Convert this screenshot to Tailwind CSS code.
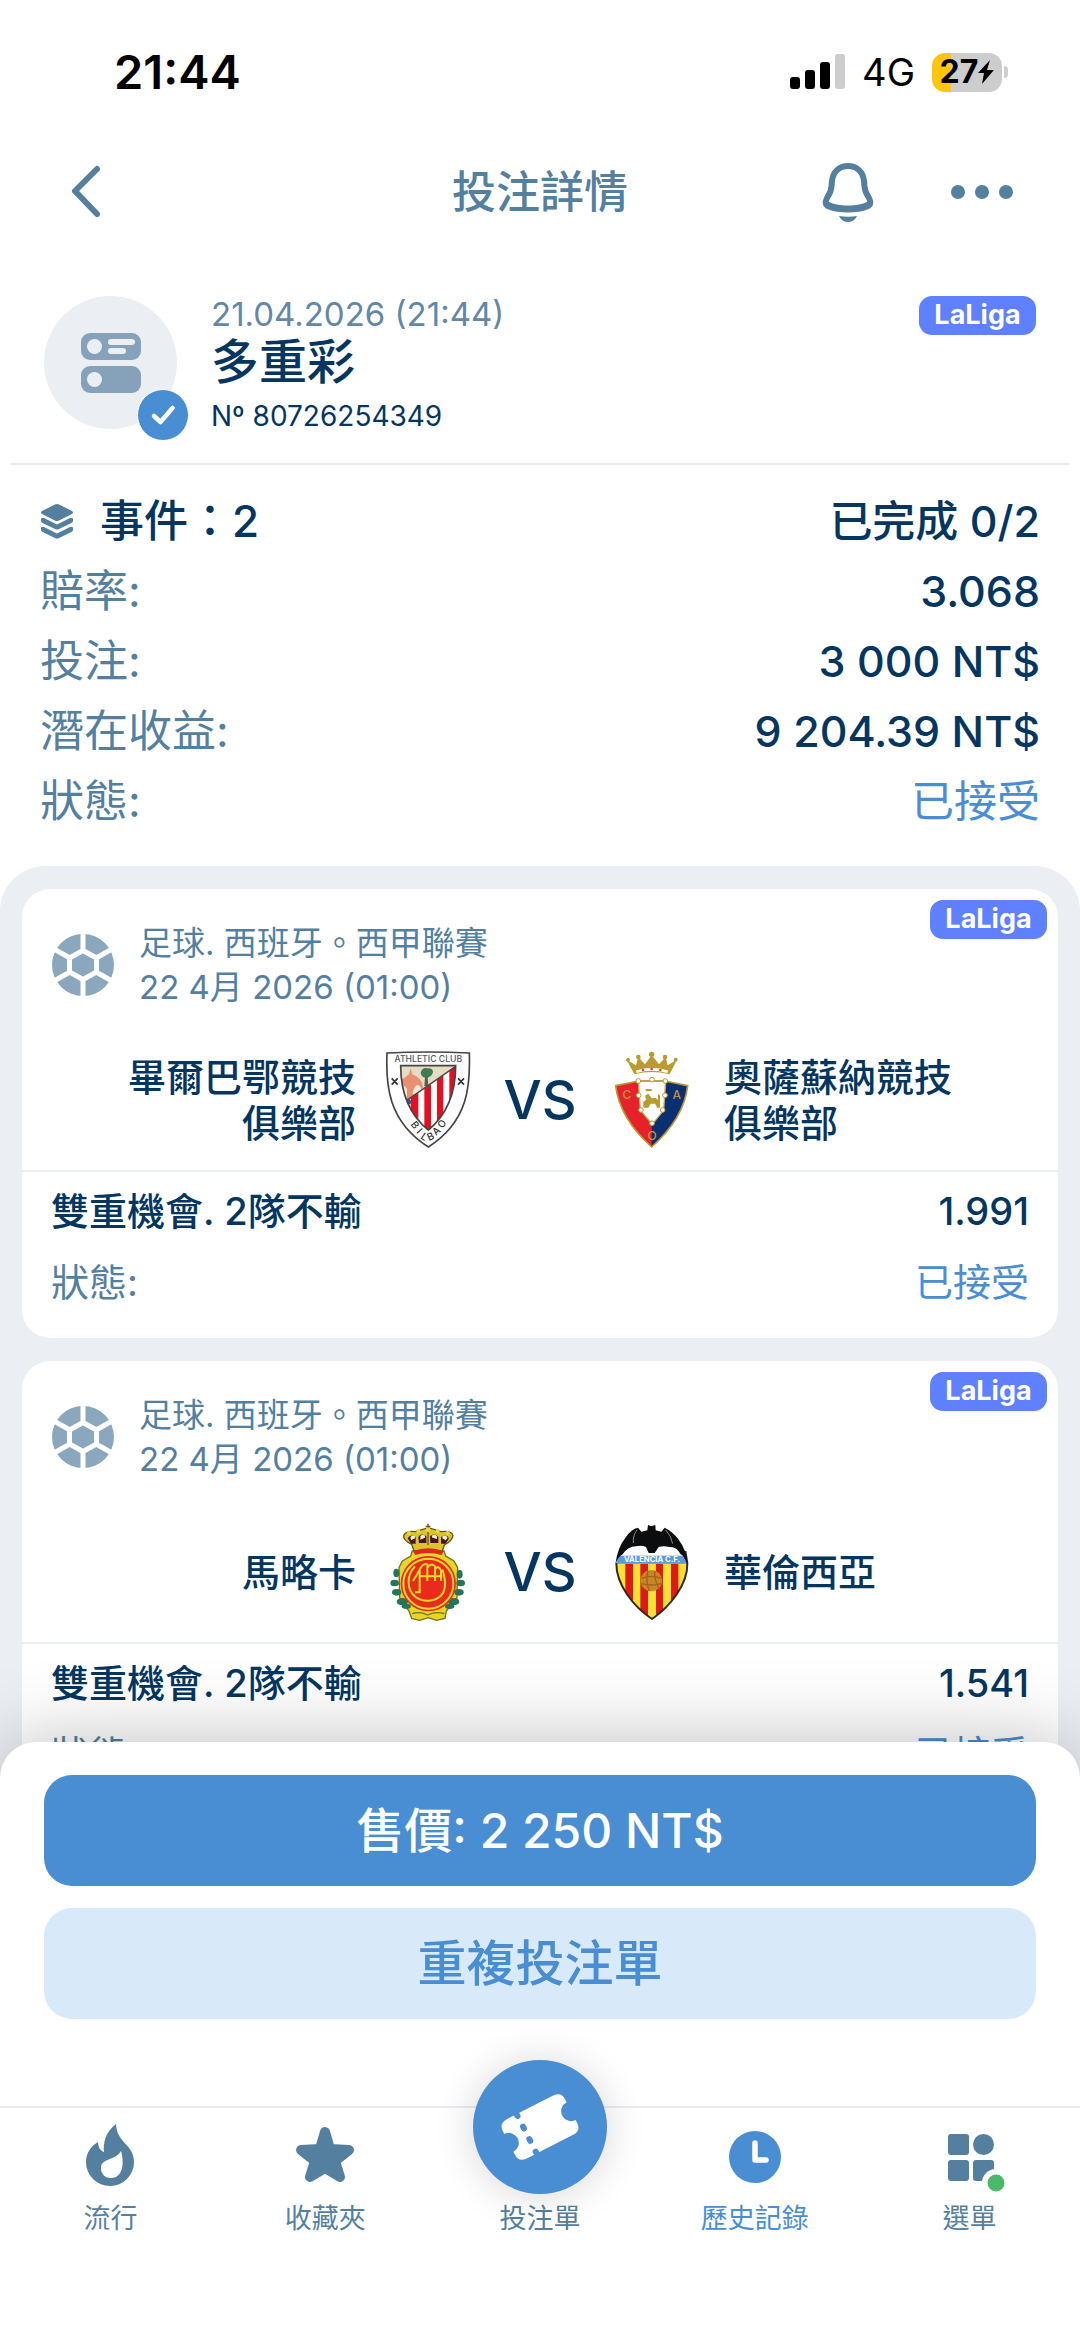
<!DOCTYPE html>
<html lang="zh-Hant">
<head>
<meta charset="utf-8">
<meta name="viewport" content="width=device-width, initial-scale=1">
<title>投注詳情</title>
<script src="https://cdn.jsdelivr.net/npm/@tailwindcss/browser@4"></script>
</head>
<body class="flex h-screen flex-col overflow-hidden bg-white font-['Inter','Noto_Sans_CJK_TC',sans-serif] text-[#04365f]">

<svg class="hidden" aria-hidden="true">
  <symbol id="ball" viewBox="0 0 62 62">
    <circle cx="31" cy="31" r="31" fill="#8aa7be"/>
    <g stroke="#fff" stroke-width="5" fill="none" stroke-linejoin="round">
      <path d="M31 16.500 44.500 24V38L31 45.500 17.500 38V24Z"/>
      <path d="M31 17V-2M44 24 62 14M44 38 62 48M31 45V64M18 38 0 48M18 24 0 14"/>
    </g>
  </symbol>
</svg>

<!-- Status bar -->
<div class="flex h-36 shrink-0 items-center justify-between pr-[72px] pl-[114px] text-black">
  <span class="text-[47px] font-semibold">21:44</span>
  <div class="flex items-center gap-[17px]">
    <svg class="h-9 w-[55px]" viewBox="0 0 55 36">
      <rect x="0" y="23" width="10" height="12" rx="3"/>
      <rect x="15" y="16" width="10" height="19" rx="3"/>
      <rect x="30" y="8" width="10" height="27" rx="3"/>
      <rect x="45" y="0" width="10" height="35" rx="3" fill="#cdcdcd"/>
    </svg>
    <span class="text-[38px]">4G</span>
    <div class="flex items-center gap-[2px]">
      <div class="flex h-[39px] w-[70px] items-center justify-center rounded-[13px] bg-linear-to-r from-[#fdc60b] from-27% to-[#cdcdcd] to-27%">
        <span class="text-[32px] font-bold">27</span>
        <svg class="h-[26px] w-4" viewBox="0 0 16 24"><path d="M12 0 0 13h6L4 24 16 10H9Z"/></svg>
      </div>
      <div class="h-3 w-1 rounded-r-full bg-[#cdcdcd]"></div>
    </div>
  </div>
</div>

<!-- Title bar -->
<header class="grid h-24 shrink-0 grid-cols-[1fr_auto_1fr] items-center px-[66px] text-[#557f9f]">
  <button type="button" aria-label="返回" class="justify-self-start">
    <svg class="h-[58px] w-10" viewBox="0 0 40 58" fill="none" stroke="currentColor" stroke-width="6" stroke-linecap="round" stroke-linejoin="round"><path d="M31 6 9 28 31 51"/></svg>
  </button>
  <h1 class="text-[44px] leading-none font-medium">投注詳情</h1>
  <div class="flex items-center gap-[76px] justify-self-end">
    <button type="button" aria-label="通知">
      <svg class="h-[60px] w-[52px]" viewBox="0 0 52 60">
        <path d="M26 4c-9 0-15 6-16 15C9.500 29 8 31 5 36c-2 4-2 7 2 8.500 5 2 11 3 19 3s14-1 19-3c4-1.500 4-4.500 2-8.500-3-5-4.500-7-5-17C41 10 35 4 26 4Z" fill="none" stroke="currentColor" stroke-width="6"/>
        <path d="M5 39c7 3.500 13 4.500 21 4.500s14-1 21-4.500v5c-6 3-12 4-21 4s-15-1-21-4Z" fill="currentColor"/>
        <path d="M17 54c6 1 12 1 18 0-2 4-5 6-9 6s-7-2-9-6Z" fill="currentColor"/>
      </svg>
    </button>
    <button type="button" aria-label="更多">
      <svg class="h-4 w-16" viewBox="0 0 64 16" fill="currentColor"><circle cx="8" cy="8" r="7"/><circle cx="32" cy="8" r="7"/><circle cx="56" cy="8" r="7"/></svg>
    </button>
  </div>
</header>

<main class="min-h-0 flex-1 overflow-y-auto [scrollbar-width:none]">
  <!-- Bet slip summary -->
  <section class="mx-[11px] flex items-start gap-[34px] border-b-2 border-[#e9ebee] px-[33px] pt-14 pb-[23px]">
    <div class="relative flex size-[133px] items-center justify-center rounded-full bg-[#ebeef3]">
      <svg class="h-[62px] w-[62px]" viewBox="0 0 62 62">
        <rect x="1" y="1" width="60" height="27" rx="9" fill="#85a2ba"/>
        <rect x="1" y="34" width="60" height="27" rx="9" fill="#85a2ba"/>
        <g fill="#ebeef3"><circle cx="14.500" cy="14.500" r="7.500"/><circle cx="14.500" cy="47.500" r="7.500"/><rect x="28" y="7" width="27" height="6" rx="3"/><rect x="28" y="16" width="18" height="6" rx="3"/></g>
      </svg>
      <span class="absolute -right-3 -bottom-3 flex size-[52px] items-center justify-center rounded-full border border-white bg-[#498dd2]">
        <svg class="size-7" viewBox="0 0 28 28" fill="none" stroke="#fff" stroke-width="4.500" stroke-linecap="round" stroke-linejoin="round"><path d="M5 15 11.500 21 23.500 7"/></svg>
      </span>
    </div>
    <div class="flex-1">
      <p class="text-[33px] leading-9 text-[#6487a4]">21.04.2026 (21:44)</p>
      <h2 class="text-[48px] leading-[60px] font-medium">多重彩</h2>
      <p class="text-[28px] leading-12">Nº 80726254349</p>
    </div>
    <span class="flex h-[39px] w-[117px] items-center justify-center rounded-[13px] bg-[#5f80ff] text-[27px] font-bold text-white">LaLiga</span>
  </section>

  <dl class="px-10 pt-[21px] pb-[30px] text-[44px] font-medium">
    <div class="flex h-[70px] items-center justify-between">
      <dt class="flex items-center gap-[26px]">
        <svg class="h-9 w-[34px]" viewBox="0 0 34 36" fill="#557f9f">
          <path d="M15 1.500q2-1 4 0L32 8q2 1.500 0 3L19 17.500q-2 1-4 0L2 11q-2-1.500 0-3Z"/>
          <path d="M1 15.500q2-1.500 4 0l12 6 12-6q2-1.500 4 0v2.500q0 1-1.500 2L19 26q-2 1-4 0L2.500 20Q1 19 1 18Z"/>
          <path d="M1 24.500q2-1.500 4 0l12 6 12-6q2-1.500 4 0V27q0 1-1.500 2L19 35q-2 1-4 0L2.500 29Q1 28 1 27Z"/>
        </svg>
        事件：2
      </dt>
      <dd class="text-[43px]">已完成 0/2</dd>
    </div>
    <div class="flex h-[70px] items-center justify-between"><dt class="font-normal text-[#557f9f]">賠率:</dt><dd class="text-[43px]">3.068</dd></div>
    <div class="flex h-[70px] items-center justify-between"><dt class="font-normal text-[#557f9f]">投注:</dt><dd class="text-[43px]">3 000 NT$</dd></div>
    <div class="flex h-[70px] items-center justify-between"><dt class="font-normal text-[#557f9f]">潛在收益:</dt><dd class="text-[43px]">9 204.39 NT$</dd></div>
    <div class="flex h-[70px] items-center justify-between"><dt class="font-normal text-[#557f9f]">狀態:</dt><dd class="text-[43px] font-normal text-[#498dd2]">已接受</dd></div>
  </dl>

  <!-- Events -->
  <div class="flex flex-col gap-[23px] rounded-t-[45px] bg-[#ebeef3] px-[22px] py-[23px]">
    <article class="relative rounded-[28px] bg-white">
      <span class="absolute top-[11px] right-[11px] flex h-[39px] w-[117px] items-center justify-center rounded-[13px] bg-[#5f80ff] text-[27px] font-bold text-white">LaLiga</span>
      <div class="flex items-center gap-[25px] px-[30px] pt-8 text-[33px] leading-11 text-[#557f9f]">
        <svg class="size-[62px]"><use href="#ball"/></svg>
        <div>
          <p>足球. 西班牙。西甲聯賽</p>
          <p>22 4月 2026 (01:00)</p>
        </div>
      </div>
      <div class="grid grid-cols-[1fr_96px_128px_96px_1fr] items-center border-b-2 border-[#ebeef3] pt-[42px] pb-[21px] text-[38px] leading-[46px] font-medium">
        <p class="pr-6 pl-20 text-right">畢爾巴鄂競技俱樂部</p>
        <svg class="h-[98px] w-[86px] justify-self-center" viewBox="78 60 258 294" role="img" aria-label="Athletic Club">
          <path d="M84 66Q208 60 331 66C334 160 330 270 208 348 86 270 80 160 84 66Z" fill="#fff" stroke="#444" stroke-width="5"/>
          <clipPath id="ath"><path d="M125 104H290C290 180 265 250 208 297 150 250 125 180 125 104Z"/></clipPath>
          <g clip-path="url(#ath)">
            <path d="M120 100H295V300H120Z" fill="#e5dcc4"/>
            <path d="M120 150Q140 140 150 130L155 112 160 130Q190 140 192 170L148 206H120Z" fill="#e8906f"/>
            <path d="M128 175Q134 155 144 175V200H128ZM160 190Q166 160 178 162 190 168 186 190Z" fill="#f5e6da"/>
            <path d="M185 125Q190 108 205 112 222 110 222 124 218 138 204 140 186 140 185 125Z" fill="#3f7c52"/>
            <path d="M198 138H206L208 166H196Z" fill="#51644d"/>
            <path d="M146 208 292 104V300H146Z" fill="#fff"/>
            <path d="M155 201 178 186V300H155ZM196 173 216 159V300H196ZM234 146 253 133V300H234ZM271 120 292 104V300H271Z" fill="#e30f23"/>
            <path d="M138 212 296 102" stroke="#444" stroke-width="4"/>
            <path d="M125 200 152 205 160 215 140 225Z" fill="#35508f"/>
          </g>
          <path d="M125 104H290C290 180 265 250 208 297 150 250 125 180 125 104Z" fill="none" stroke="#444" stroke-width="5"/>
          <path d="M98 142 116 161M116 142 98 161M297 142 315 161M315 142 297 161" stroke="#333" stroke-width="5"/>
          <g fill="#555" font-family="Inter, sans-serif" text-anchor="middle" font-weight="500">
            <text x="208" y="93" font-size="26">ATHLETIC CLUB</text>
            <g font-size="30" fill="#333">
              <text transform="translate(160 288) rotate(52)">B</text><text transform="translate(174 307) rotate(48)">I</text><text transform="translate(190 326) rotate(35)">L</text>
              <text transform="translate(219 326) rotate(-25)">B</text><text transform="translate(239 308) rotate(-42)">A</text><text transform="translate(257 285) rotate(-52)">O</text>
            </g>
          </g>
        </svg>
        <span class="text-center text-[54px]">VS</span>
        <svg class="h-[98px] w-[74px] justify-self-center" viewBox="768 60 222 294" role="img" aria-label="Osasuna">
          <g fill="#b99b2f">
            <path d="M826 130 803 86 831 103 838 78 858 100 878 72 900 100 920 78 926 103 954 86 932 130Q878 116 826 130Z"/>
            <circle cx="878" cy="70" r="8"/><circle cx="838" cy="78" r="7"/><circle cx="918" cy="78" r="7"/><circle cx="807" cy="86" r="6"/><circle cx="950" cy="86" r="6"/>
          </g>
          <path d="M832 122Q878 108 926 122" fill="none" stroke="#fff" stroke-width="8"/>
          <g fill="#e2452f"><circle cx="852" cy="117" r="4"/><circle cx="878" cy="114" r="4"/><circle cx="904" cy="117" r="4"/></g>
          <path d="M770 164 840 150H918L986 164Q975 262 878 348 782 262 770 164Z" fill="#0b2f73"/>
          <path d="M770 164 840 150 878 150V348Q782 262 770 164Z" fill="#e5222a"/>
          <path d="M838 150H920L914 238 880 280 844 238Z" fill="#fff" stroke="#c5ab4a" stroke-width="4"/>
          <path d="M770 164 840 150H918L986 164Q975 262 878 348 782 262 770 164Z" fill="none" stroke="#b99b2f" stroke-width="5"/>
          <g fill="#fff" stroke="#b99b2f" stroke-width="3"><circle cx="838" cy="150" r="7"/><circle cx="879" cy="146" r="7"/><circle cx="919" cy="150" r="7"/><circle cx="839" cy="193" r="7"/><circle cx="918" cy="193" r="7"/><circle cx="846" cy="237" r="7"/><circle cx="911" cy="237" r="7"/><circle cx="879" cy="277" r="7"/></g>
          <path d="M853 230V212L862 206 858 194 868 188 878 202 890 200 897 208V188L903 194V230H894L889 218H875L868 230ZM860 174H878V180H860Z" fill="#b99b2f"/>
          <g font-family="Inter, sans-serif" font-size="36" text-anchor="middle" fill="#c4923a"><text x="804" y="205">C</text><text x="953" y="205">A</text><text x="879" y="326">O</text></g>
        </svg>
        <p class="pr-20 pl-6">奧薩蘇納競技俱樂部</p>
      </div>
      <div class="flex h-[78px] items-center justify-between px-[29px] text-[38px] font-medium"><span>雙重機會. 2隊不輸</span><span>1.991</span></div>
      <div class="flex h-[88px] items-start justify-between px-[29px] text-[38px] leading-[64px]"><span class="text-[#557f9f]">狀態:</span><span class="text-[#498dd2]">已接受</span></div>
    </article>

    <article class="relative rounded-[28px] bg-white">
      <span class="absolute top-[11px] right-[11px] flex h-[39px] w-[117px] items-center justify-center rounded-[13px] bg-[#5f80ff] text-[27px] font-bold text-white">LaLiga</span>
      <div class="flex items-center gap-[25px] px-[30px] pt-8 text-[33px] leading-11 text-[#557f9f]">
        <svg class="size-[62px]"><use href="#ball"/></svg>
        <div>
          <p>足球. 西班牙。西甲聯賽</p>
          <p>22 4月 2026 (01:00)</p>
        </div>
      </div>
      <div class="grid grid-cols-[1fr_96px_128px_96px_1fr] items-center border-b-2 border-[#ebeef3] pt-[42px] pb-[21px] text-[38px] leading-[46px] font-medium">
        <p class="pr-6 pl-20 text-right">馬略卡</p>
        <svg class="h-[98px] w-[76px] justify-self-center" viewBox="93 66 228 294" role="img" aria-label="Mallorca">
          <path d="M130 180 155 165 160 150H255L260 165 285 180 296 200 294 290 262 330 258 352 232 358 208 350 182 358 158 352 150 330 122 290 120 200Z" fill="#e9d523" stroke="#6f7422" stroke-width="4"/>
          <g fill="#23765a">
            <ellipse cx="112" cy="216" rx="9" ry="13"/><ellipse cx="107" cy="246" rx="13" ry="10"/><ellipse cx="113" cy="274" rx="14" ry="10"/><ellipse cx="130" cy="302" rx="17" ry="11"/><ellipse cx="142" cy="316" rx="14" ry="8"/>
            <ellipse cx="302" cy="220" rx="9" ry="13"/><ellipse cx="305" cy="246" rx="13" ry="10"/><ellipse cx="300" cy="274" rx="14" ry="10"/><ellipse cx="284" cy="302" rx="17" ry="11"/><ellipse cx="272" cy="316" rx="14" ry="8"/>
          </g>
          <circle cx="208" cy="248" r="83" fill="#ea2a1c"/>
          <g fill="none" stroke="#f3dc2b" stroke-width="6">
            <circle cx="208" cy="248" r="75"/>
            <path d="M168 196C142 222 142 266 170 288 196 306 236 302 252 276 262 256 258 226 250 206"/>
            <path d="M162 240Q174 222 182 206V274H168M182 206Q192 186 205 190V240M205 200Q216 184 228 196V240M228 204Q238 192 246 208V240M182 226H250"/>
          </g>
          <path d="M165 150 158 130Q132 118 134 104 140 88 170 92L208 80 246 92Q278 88 282 104 280 120 256 132L250 150Z" fill="#dcc52a" stroke="#61591c" stroke-width="4"/>
          <path d="M146 112Q154 98 170 108V128H156ZM178 108Q188 92 202 106V126H180ZM213 106Q228 92 238 108V126H214ZM246 108Q264 98 270 112L260 128H246Z" fill="#4b1421"/>
          <path d="M154 108Q160 100 168 106V112L156 118ZM184 106Q190 96 198 104V110L184 116ZM218 104Q228 96 234 106V114L220 110ZM250 106Q260 100 266 110L260 118 250 112Z" fill="#f3ece0"/>
          <path d="M162 150Q208 134 254 150L248 162Q208 150 168 162Z" fill="#dc2b1e"/>
          <path d="M200 76H214M207 68V132" stroke="#61591c" stroke-width="4"/>
          <g fill="#ecd934"><circle cx="150" cy="96" r="6"/><circle cx="178" cy="90" r="6"/><circle cx="207" cy="86" r="7"/><circle cx="236" cy="90" r="6"/><circle cx="266" cy="96" r="6"/></g>
          <path d="M160 338Q182 330 206 342 230 330 256 338" fill="none" stroke="#6f7422" stroke-width="4"/>
        </svg>
        <span class="text-center text-[54px]">VS</span>
        <svg class="h-[98px] w-[76px] justify-self-center" viewBox="764 66 228 294" role="img" aria-label="Valencia">
          <clipPath id="val"><path d="M771 186C776 140 810 106 878 106S978 140 984 186C986 252 930 318 878 354 824 318 770 252 771 186Z"/></clipPath>
          <g clip-path="url(#val)">
            <path d="M765 100H990V360H765Z" fill="#fbe034"/>
            <path d="M765 100H990V164H765Z" fill="#fff"/>
            <path d="M798 188H821V360H798ZM843 188H866V360H843ZM890 188H911V360H890ZM935 188H957V360H935Z" fill="#dc1b16"/>
            <path d="M765 164H990V188H765Z" fill="#5a9be0"/>
          </g>
          <text x="878" y="184" font-family="Inter, sans-serif" font-size="23" font-weight="700" text-anchor="middle" fill="#fff">VALENCIA C.F.</text>
          <path d="M771 186C770 252 824 318 878 354 930 318 986 252 984 186L978 150" fill="none" stroke="#33281a" stroke-width="6"/>
          <circle cx="876" cy="239" r="32" fill="#c8862a"/>
          <path d="M848 232Q876 220 906 232M846 248Q876 256 906 248M866 210Q858 240 870 270M888 210Q880 226 900 264" fill="none" stroke="#a36314" stroke-width="4"/>
          <path d="M768 190Q774 140 800 108 816 84 836 80L846 92 864 88 866 72 876 76 888 72 889 88 906 92 916 80Q940 92 955 112 984 150 984 190 974 164 964 160 952 136 930 138 912 134 898 138L886 156H868L860 138Q846 132 830 136 806 136 790 160 776 166 768 190Z" fill="#0c0d0f"/>
          <path d="M834 86Q820 102 822 126M918 86Q936 104 940 128" fill="none" stroke="#888" stroke-width="3"/>
        </svg>
        <p class="pr-20 pl-6">華倫西亞</p>
      </div>
      <div class="flex h-[78px] items-center justify-between px-[29px] text-[38px] font-medium"><span>雙重機會. 2隊不輸</span><span>1.541</span></div>
      <div class="flex h-[88px] items-start justify-between px-[29px] text-[38px] leading-[64px]"><span class="text-[#557f9f]">狀態:</span><span class="text-[#498dd2]">已接受</span></div>
    </article>
  </div>
</main>

<!-- Actions and tab bar -->
<footer class="relative z-10 -mt-9 shrink-0 rounded-t-[36px] bg-white shadow-[0_0_80px_rgba(0,0,0,0.26)]">
  <div class="flex flex-col gap-[22px] px-11 pt-[33px] pb-[87px] text-[48px] font-medium">
    <button type="button" class="h-[111px] rounded-[28px] bg-[#498dd2] text-white">售價: 2 250 NT$</button>
    <button type="button" class="h-[111px] rounded-[28px] bg-[#d8eafa] text-[49px] text-[#498dd2]">重複投注單</button>
  </div>
  <nav class="relative grid grid-cols-5 border-t-2 border-[#e9ebee] px-[3px] pt-4 pb-[100px] text-[27px] leading-9 text-[#557f9f]">
    <a href="#" class="flex flex-col items-center gap-[13px]">
      <svg class="size-16" viewBox="0 0 64 64" fill="currentColor">
        <path fill-rule="evenodd" d="M38 0C27 8 25 20 26 28 22 27 20 22 20 18 13 22 8 29 8 38A24 24 0 0 0 56 38C56 20 39 20 38 0ZM43 27C47 41 44 54 33 54 26 54 23 49 23 44 23 34 37 37 43 27Z"/>
      </svg>流行
    </a>
    <a href="#" class="flex flex-col items-center gap-[13px]">
      <svg class="size-16" viewBox="0 0 64 64" fill="currentColor" stroke="currentColor" stroke-width="10" stroke-linejoin="round">
        <path d="M32 8 37 25 56 26 42 37 47 53 32 44 17 53 22 37 8 26 27 25Z"/>
      </svg>收藏夾
    </a>
    <a href="#" class="flex flex-col items-center gap-[13px]">
      <span class="relative size-16">
        <span class="absolute top-1/2 left-1/2 flex size-[134px] -translate-x-1/2 -translate-y-[96px] items-center justify-center rounded-full bg-[#498dd2] shadow-[0_2px_40px_rgba(0,0,0,0.16)]">
          <svg class="size-[90px]" viewBox="-45 -45 90 90">
            <g transform="rotate(-27)">
              <path d="M-26-22H26Q35-22 35-13V-10A10 10 0 0 0 35 10V13Q35 22 26 22H-26Q-35 22-35 13V10A10 10 0 0 0-35-10V-13Q-35-22-26-22Z" fill="#fff"/>
              <path d="M-15-21V-20M-15-8V-6M-15 6V8M-15 20V21" stroke="#498dd2" stroke-width="6" stroke-linecap="round"/>
            </g>
          </svg>
        </span>
      </span>投注單
    </a>
    <a href="#" aria-current="page" class="flex flex-col items-center gap-[13px] text-[#498dd2]">
      <svg class="size-16" viewBox="0 0 64 64"><circle cx="32" cy="33" r="26" fill="currentColor"/><path d="M32 19V36H43" fill="none" stroke="#fff" stroke-width="5.500" stroke-linecap="round" stroke-linejoin="round"/></svg>歷史記錄
    </a>
    <a href="#" class="flex flex-col items-center gap-[13px]">
      <svg class="size-16 overflow-visible" viewBox="0 0 64 64" fill="currentColor">
        <rect x="10" y="10" width="21" height="21" rx="3"/><circle cx="45.500" cy="20.500" r="10.500"/><rect x="10" y="36" width="21" height="21" rx="3"/><rect x="35" y="36" width="21" height="21" rx="3"/>
        <circle cx="58" cy="59" r="14" fill="#fff"/><circle cx="58" cy="59" r="8.500" fill="#4cb86a"/>
      </svg>選單
    </a>
  </nav>
</footer>
</body>
</html>
